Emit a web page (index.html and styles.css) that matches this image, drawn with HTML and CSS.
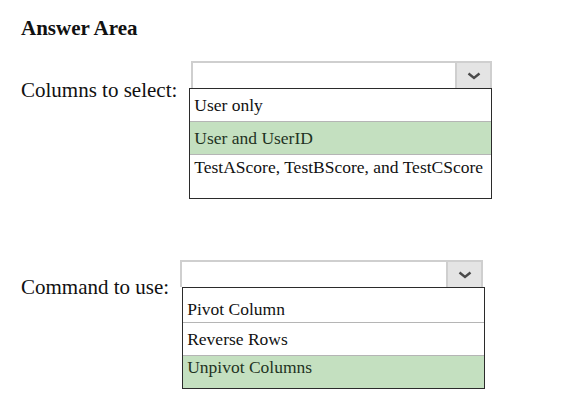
FILE: index.html
```html
<!DOCTYPE html>
<html lang="en">
<head>
  <meta charset="UTF-8" />
  <title>Answer Area</title>
  <link rel="stylesheet" href="styles.css">
</head>
<body>
  <h1>Answer Area</h1>

  <div class="field">
    <span class="label">Columns to select:</span>
    <div class="dropdown">
      <div class="select">
        <span class="arrow">
          <svg width="14" height="8" viewBox="0 0 14 8"><path d="M1.5 1.5 L7 6 L12.5 1.5" fill="none" stroke="#4a4a4a" stroke-width="2.4"/></svg>
        </span>
      </div>
      <ul class="list">
        <li>User only</li>
        <li class="picked">User and UserID</li>
        <li class="last">TestAScore, TestBScore, and TestCScore</li>
      </ul>
    </div>
  </div>

  <div class="field second">
    <span class="label">Command to use:</span>
    <div class="dropdown">
      <div class="select">
        <span class="arrow">
          <svg width="14" height="8" viewBox="0 0 14 8"><path d="M1.5 1.5 L7 6 L12.5 1.5" fill="none" stroke="#4a4a4a" stroke-width="2.4"/></svg>
        </span>
      </div>
      <ul class="list">
        <li class="first">Pivot Column</li>
        <li>Reverse Rows</li>
        <li class="picked last">Unpivot Columns</li>
      </ul>
    </div>
  </div>
</body>
</html>
```

FILE: styles.css
```css
body {
  font-family: 'Liberation Serif', 'Times New Roman', serif;
  background: #fff;
  color: #111;
  margin: 0;
  padding: 16px 0 0 21px;
}

h1 {
  font-size: 21px;
  font-weight: bold;
  line-height: 24px;
  margin: 0 0 21px 0;
}

.field {
  display: flex;
  align-items: flex-start;
  gap: 12px;
}

.field.second {
  margin-top: 61px;
  gap: 13px;
}

.label {
  font-size: 21px;
  line-height: 24px;
  margin-top: 17px;
}

.second .label {
  margin-top: 15px;
}

.dropdown {
  width: 303px;
}

.select {
  height: 27px;
  box-sizing: border-box;
  border: 2px solid #cfcfcf;
  border-bottom: none;
  margin-left: 2px;
  display: flex;
  justify-content: flex-end;
}

.second .select {
  margin-left: -2px;
  margin-right: 2px;
}

.arrow {
  width: 33px;
  background: #e4e4e4;
  border-left: 2px solid #cfcfcf;
  display: flex;
  align-items: center;
  justify-content: center;
}

.list {
  list-style: none;
  margin: 0;
  padding: 0;
  border: 1.5px solid #2b2b2b;
}

.list li {
  font-size: 17.5px;
  line-height: 20px;
  padding: 6px 5px 6px 4px;
  border-bottom: 1px solid #b5b5b5;
}

.list li.first {
  padding-top: 11px;
  padding-bottom: 3px;
}

.list li.last {
  border-bottom: none;
  padding-top: 2px;
  padding-bottom: 21px;
}

.second .list li.last {
  padding-top: 1px;
  padding-bottom: 11px;
}

.list li.picked {
  background: #c4e0c0;
  color: #1f331f;
}
```
